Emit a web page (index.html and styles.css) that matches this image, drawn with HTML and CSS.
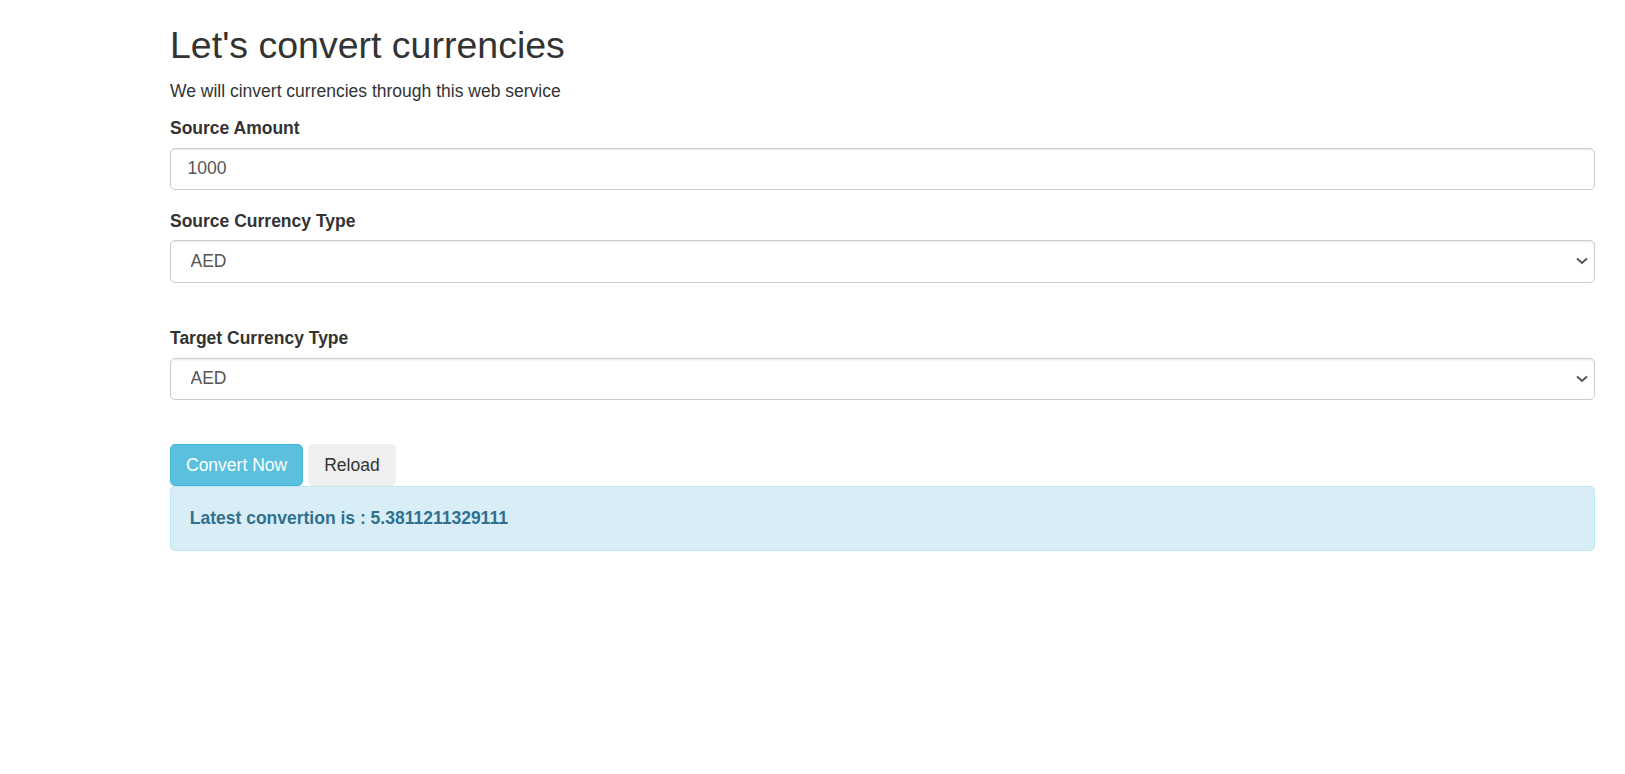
FILE: index.html
```html
<!DOCTYPE html>
<html lang="en">
<head>
<meta charset="utf-8">
<title>Currency Converter</title>
<link rel="stylesheet" href="styles.css">
</head>
<body>
<div class="page">
  <h2 class="title">Let's convert currencies</h2>
  <p class="lead-text">We will cinvert currencies through this web service</p>

  <div class="form-group">
    <label class="label" for="amount">Source Amount</label>
    <input class="control input" id="amount" type="text" value="1000">
  </div>

  <div class="form-group">
    <label class="label" for="src">Source Currency Type</label>
    <div class="select-wrap">
      <select class="control select" id="src"><option>AED</option></select>
      <svg class="chevron" width="12" height="8" viewBox="0 0 12 8"><path d="M1 1.5 L6 6 L11 1.5" fill="none" stroke="#555" stroke-width="2"/></svg>
    </div>
  </div>
  <div class="spacer"></div>

  <div class="form-group">
    <label class="label" for="tgt">Target Currency Type</label>
    <div class="select-wrap">
      <select class="control select" id="tgt"><option>AED</option></select>
      <svg class="chevron" width="12" height="8" viewBox="0 0 12 8"><path d="M1 1.5 L6 6 L11 1.5" fill="none" stroke="#555" stroke-width="2"/></svg>
    </div>
  </div>
  <div class="spacer"></div>

  <div class="buttons">
    <button class="btn btn-info" type="button">Convert Now</button>
    <button class="btn btn-plain" type="button">Reload</button>
  </div>
  <div class="alert">Latest convertion is : 5.3811211329111</div>
</div>
</body>
</html>
```

FILE: styles.css
```css
html, body {
  margin: 0;
  padding: 0;
  background: #fff;
}
body {
  font-family: "Liberation Sans", Arial, Helvetica, sans-serif;
  font-size: 17.5px;
  line-height: 25px;
  color: #333;
}
.page {
  padding: 0 30px 0 170px;
}
.title {
  margin: 25px 0 12.5px;
  font-size: 37.5px;
  line-height: 1.1;
  font-weight: 500;
  color: #333;
}
.lead-text {
  margin: 0 0 12.5px;
}
.form-group {
  margin-bottom: 18.75px;
}
.label {
  display: inline-block;
  margin-bottom: 6.25px;
  font-weight: bold;
}
.control {
  display: block;
  box-sizing: border-box;
  width: 100%;
  height: 42.5px;
  padding: 7.5px 15px;
  font-family: inherit;
  font-size: 17.5px;
  line-height: 25px;
  color: #555;
  background: #fff;
  border: 1.25px solid #ccc;
  border-radius: 5px;
  box-shadow: inset 0 1.25px 1.25px rgba(0,0,0,.075);
  margin: 0;
  outline: none;
}
.input {
  padding-left: 16.5px;
}
.select-wrap {
  position: relative;
}
.select {
  -webkit-appearance: none;
  appearance: none;
  padding-left: 19.5px;
}
.chevron {
  position: absolute;
  right: 7px;
  top: 17px;
}
.spacer {
  height: 25px;
}
.buttons {
  display: flex;
  gap: 5px;
}
.btn {
  box-sizing: border-box;
  height: 42.5px;
  padding: 7.5px 15px;
  font-family: inherit;
  font-size: 17.5px;
  line-height: 25px;
  border: 1.25px solid transparent;
  border-radius: 5px;
  margin: 0;
  cursor: pointer;
}
.btn-info {
  background: #5bc0de;
  border-color: #46b8da;
  color: #fff;
}
.btn-plain {
  background: #efefef;
  color: #333;
}
.alert {
  padding: 18.75px;
  background: #d9edf7;
  border: 1.25px solid #bce8f1;
  border-radius: 5px;
  color: #31708f;
  font-weight: bold;
}
```
